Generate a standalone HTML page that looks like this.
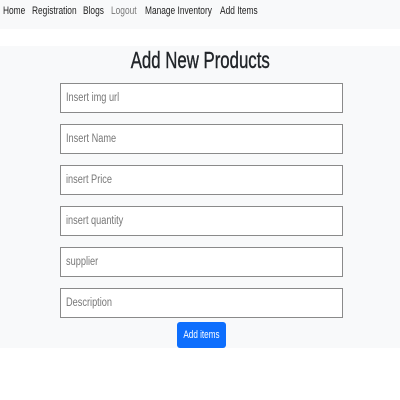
<!DOCTYPE html>
<html><head><style>
body{margin:0;width:400px;height:400px;background:#fff;font-family:"Liberation Sans",sans-serif;position:relative;overflow:hidden}
.nav{position:absolute;left:0;top:0;width:400px;height:29px;background:#f8f9fa}
.nav span{position:absolute;top:5px;font-size:11px;color:#222;white-space:nowrap;transform:scaleX(.76);transform-origin:left}
.sec{position:absolute;left:0;top:46px;width:400px;height:302px;background:#f8f9fa}
h1{position:absolute;top:47px;left:0;width:400px;text-align:center;margin:0;font-size:23px;font-weight:normal;color:#212529;-webkit-text-stroke:.4px #212529}
h1 span{display:inline-block;transform:scaleX(.73)}
.in{position:absolute;left:60px;width:281px;height:28px;background:#fff;border:1px solid #8a8a8a;box-sizing:content-box}
.in span{position:absolute;left:5px;top:8px;font-size:11.5px;color:#777;transform:scaleX(.8);transform-origin:left;white-space:nowrap}
.btn{position:absolute;left:177px;top:322px;width:49px;height:26px;background:#0d6efd;border-radius:3px;color:#fff;font-size:11px;text-align:center;line-height:26px}
.btn span{display:inline-block;transform:scaleX(.74)}
</style></head><body>
<div class="nav">
<span style="left:3px">Home</span>
<span style="left:32px">Registration</span>
<span style="left:83px">Blogs</span>
<span style="left:111px;color:#777">Logout</span>
<span style="left:145px">Manage Inventory</span>
<span style="left:220px">Add Items</span>
</div>
<div class="sec"></div>
<h1><span>Add New Products</span></h1>
<div class="in" style="top:83px"><span>Insert img url</span></div>
<div class="in" style="top:124px"><span>Insert Name</span></div>
<div class="in" style="top:165px"><span>insert Price</span></div>
<div class="in" style="top:206px"><span>insert quantity</span></div>
<div class="in" style="top:247px"><span>supplier</span></div>
<div class="in" style="top:288px"><span>Description</span></div>
<div class="btn"><span>Add items</span></div>
</body></html>
